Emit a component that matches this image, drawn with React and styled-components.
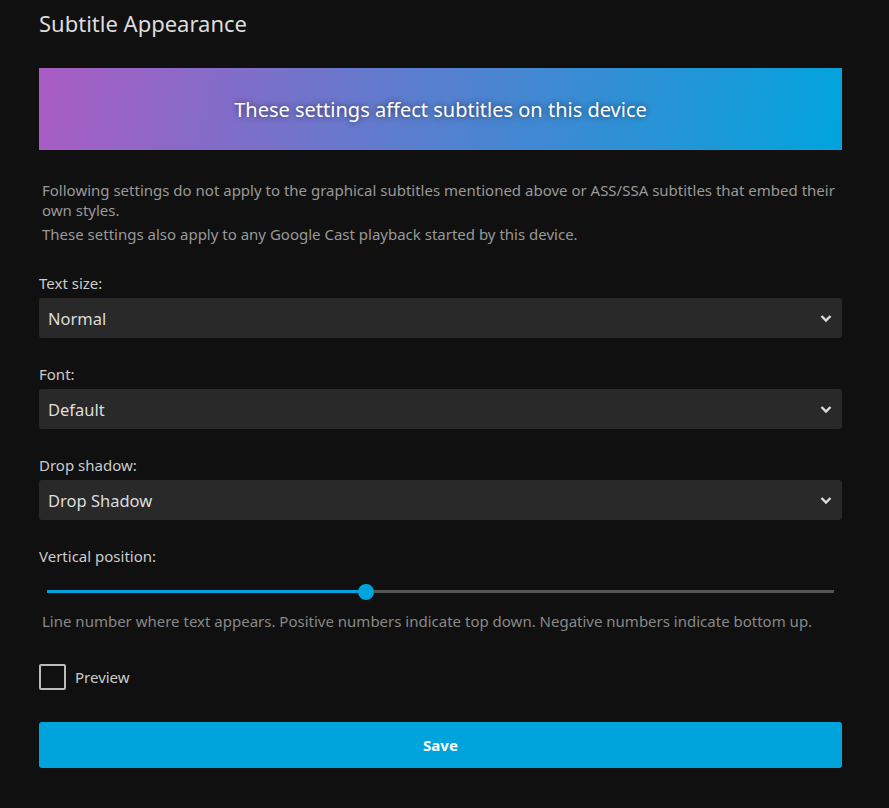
import React, { useState } from "react";
import styled, { createGlobalStyle } from "styled-components";

const GlobalStyle = createGlobalStyle`
  html, body {
    margin: 0;
    padding: 0;
    background: #101010;
  }
  body {
    font-family: "Noto Sans", "Open Sans", sans-serif;
    color: rgba(255, 255, 255, 0.8);
  }
`;

const Page = styled.div`
  width: 803px;
  padding: 8px 0 40px 39px;
`;

const Title = styled.h2`
  margin: 0;
  font-size: 22px;
  font-weight: 400;
  line-height: 30px;
  color: #ddd;
`;

const Banner = styled.div`
  margin-top: 30px;
  height: 82px;
  display: flex;
  align-items: center;
  justify-content: center;
  background: linear-gradient(100deg, #aa5cc3 0%, #00a4dc 100%);
  color: #fff;
  font-size: 20px;
  text-shadow: 0 0 6px rgba(0, 0, 0, 0.6);
`;

const Notes = styled.div`
  margin-top: 30px;
  padding-left: 3px;
  font-size: 15px;
  line-height: 20px;
  color: #999;
`;

const Note = styled.p`
  margin: 0 0 4px;
`;

const Field = styled.div`
  margin-top: ${(p) => p.$top || 26}px;
`;

const Label = styled.label`
  display: block;
  font-size: 15px;
  line-height: 20px;
  color: #ccc;
  margin-bottom: 5px;
`;

const SelectBox = styled.div`
  height: 40px;
  display: flex;
  align-items: center;
  justify-content: space-between;
  padding: 0 9px;
  background: #292929;
  border-radius: 3px;
  font-size: 16.5px;
  color: #ddd;
`;

const Chevron = () => (
  <svg width="14" height="14" viewBox="0 0 14 14">
    <path d="M2.5 5 L7 9.5 L11.5 5" fill="none" stroke="#ddd" strokeWidth="2.4" />
  </svg>
);

const Track = styled.div`
  position: relative;
  margin: 24px 8px 0 8px;
  height: 3px;
  background: #555;
`;

const Filled = styled.div`
  height: 100%;
  background: #00a4dc;
`;

const Thumb = styled.div`
  position: absolute;
  top: 50%;
  width: 16px;
  height: 16px;
  margin: -8px 0 0 -8px;
  border-radius: 50%;
  background: #00a4dc;
`;

const Help = styled.div`
  margin-top: 18px;
  padding-left: 3px;
  font-size: 15px;
  line-height: 20px;
  color: #888;
`;

const CheckRow = styled.label`
  display: flex;
  align-items: center;
  gap: 9px;
  margin-top: 33px;
  font-size: 15px;
  color: #ccc;
`;

const Box = styled.span`
  width: 23px;
  height: 22px;
  border: 2px solid #bbb;
  border-radius: 2px;
`;

const SaveButton = styled.button`
  display: block;
  width: 100%;
  height: 46px;
  margin-top: 32px;
  border: none;
  border-radius: 3px;
  background: #00a4dc;
  color: #fff;
  font-family: inherit;
  font-size: 15px;
  font-weight: 700;
`;

const Select = ({ label, value, top }) => (
  <Field $top={top}>
    <Label>{label}</Label>
    <SelectBox>
      <span>{value}</span>
      <Chevron />
    </SelectBox>
  </Field>
);

const App = () => {
  const [pos] = useState(40.5);
  return (
    <Page>
      <GlobalStyle />
      <Title>Subtitle Appearance</Title>
      <Banner>These settings affect subtitles on this device</Banner>
      <Notes>
        <Note>
          Following settings do not apply to the graphical subtitles mentioned above or ASS/SSA
          subtitles that embed their own styles.
        </Note>
        <Note>These settings also apply to any Google Cast playback started by this device.</Note>
      </Notes>
      <Select label="Text size:" value="Normal" top={29} />
      <Select label="Font:" value="Default" />
      <Select label="Drop shadow:" value="Drop Shadow" />
      <Field>
        <Label>Vertical position:</Label>
        <Track>
          <Filled style={{ width: `${pos}%` }} />
          <Thumb style={{ left: `${pos}%` }} />
        </Track>
        <Help>
          Line number where text appears. Positive numbers indicate top down. Negative numbers
          indicate bottom up.
        </Help>
      </Field>
      <CheckRow>
        <Box />
        Preview
      </CheckRow>
      <SaveButton>Save</SaveButton>
    </Page>
  );
};

export default App;
